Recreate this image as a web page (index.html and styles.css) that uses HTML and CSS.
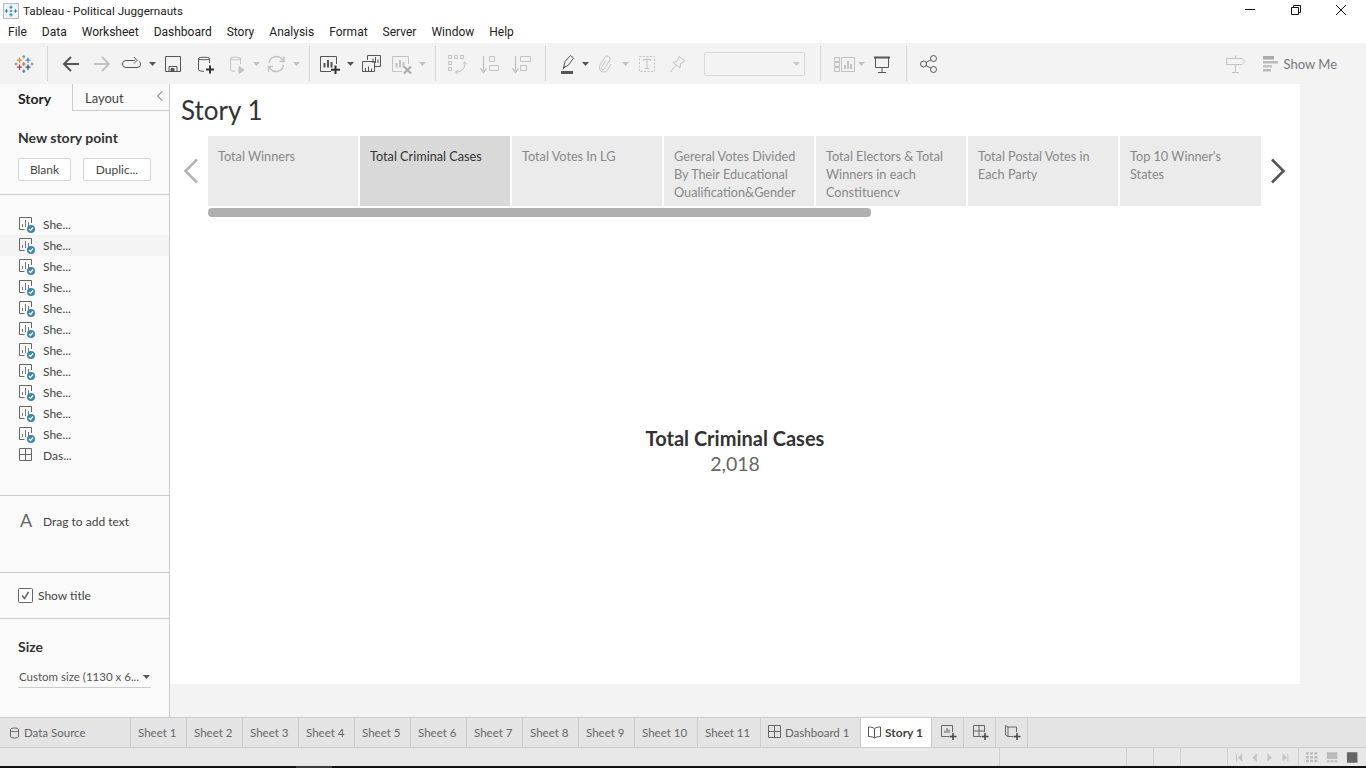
FILE: index.html
```html
<!DOCTYPE html>
<html lang="en">
  <head>
    <meta charset="UTF-8" />
    <title>Tableau - Political Juggernauts</title>
    <link rel="stylesheet" href="styles.css">
  </head>
  <body>
    <svg class="defs" width="0" height="0">
      <symbol id="sheet" viewBox="0 0 18 18">
        <path d="M6.500 13.500H1.500V1.500H13.500V7" fill="none" stroke="#666"/>
        <path d="M4.500 11V8M7.500 11V4M10.500 11V6" fill="none" stroke="#777"/>
        <circle cx="13" cy="13" r="4" fill="#3b86ac"/>
        <path d="M11 13l1.500 1.500 2.500-3" fill="none" stroke="#fff" stroke-width="1.200"/>
      </symbol>
      <symbol id="dash" viewBox="0 0 18 18">
        <path d="M1.500 1.500H13.500V13.500H1.500ZM7.500 1.500V13.500M1.500 7.500H13.500" fill="none" stroke="#666"/>
      </symbol>
      <symbol id="caret" viewBox="0 0 7 4">
        <path d="M0 0H7L3.500 4Z" fill="currentColor"/>
      </symbol>
    </svg>

    <!-- window title -->
    <div class="titlebar">
      <svg class="app-logo" width="16" height="16" viewBox="0 0 16 16">
        <rect x="0.500" y="0.500" width="15" height="15" fill="#eef3f6" stroke="#bbb"/>
        <path d="M8 2.500V6M6.300 4.200H9.700M8 10V13.500M6.300 11.800H9.700M3.500 6.300V9.700M1.800 8H5.200M12.500 6.300V9.700M10.800 8H14.200M6.800 8H9.200M8 6.800V9.200" stroke="#2f7fa8" fill="none"/>
      </svg>
      <span class="app-title">Tableau - Political Juggernauts</span>
      <div class="win-btns">
        <span class="win-btn">
          <svg width="12" height="12" viewBox="0 0 12 12"><path d="M1 5.500H11" stroke="#111"/></svg>
        </span>
        <span class="win-btn">
          <svg width="12" height="12" viewBox="0 0 12 12"><path d="M1.500 3.500H8.500V10.500H1.500ZM3.500 3.500V1.500H10.500V8.500H8.500" fill="none" stroke="#111"/></svg>
        </span>
        <span class="win-btn">
          <svg width="12" height="12" viewBox="0 0 12 12"><path d="M1 1L11 11M11 1L1 11" stroke="#111"/></svg>
        </span>
      </div>
    </div>

    <nav class="menubar">
      <a>File</a><a>Data</a><a>Worksheet</a><a>Dashboard</a><a>Story</a><a>Analysis</a><a>Format</a><a>Server</a><a>Window</a><a>Help</a>
    </nav>

    <!-- toolbar, cells keep the icons on their columns -->
    <div class="toolbar">
      <span class="cell w32">
        <svg width="20" height="20" viewBox="0 0 20 20" fill="none" stroke-width="1.200">
          <path d="M5.500 3.500V9M3 6.200H8" stroke="#e8862e"/>
          <path d="M14 3.500V9M11.500 6.200H16.500" stroke="#5b87a8"/>
          <path d="M5.500 10.500V16M3 13.200H8" stroke="#c5354c"/>
          <path d="M14 10.500V16M11.500 13.200H16.500" stroke="#2c4f7c"/>
          <path d="M9.800 1V4.500M8.300 2.700H11.300" stroke="#6aa0b8"/>
          <path d="M9.800 15.500V19M8.300 17.200H11.300" stroke="#4f7fa0"/>
          <path d="M2 8.500V11.500M.5 10H3.500" stroke="#7a9cb2"/>
          <path d="M18 8.500V11.500M16.500 10H19.500" stroke="#6f91a8"/>
          <path d="M9.800 8V12M8 10H11.600" stroke="#b5763c"/>
        </svg>
      </span>
      <span class="cell w15"><i class="sep"></i></span>
      <span class="cell w31 on">
        <svg class="ic" viewBox="0 0 24 24" stroke-width="2"><path d="M20 12H5M12 5l-7 7 7 7"/></svg>
      </span>
      <span class="cell w32 off">
        <svg class="ic" viewBox="0 0 24 24" stroke-width="2"><path d="M4 12H19M12 5l7 7-7 7"/></svg>
      </span>
      <span class="cell w26 on">
        <svg class="ic" viewBox="0 0 24 24"><path d="M16 8.500H7a3.500 3.500 0 0 0 0 7h11a3.500 3.500 0 0 0 2.500-6"/><path d="M15 5l3 3.500-3 3" /></svg>
      </span>
      <span class="cell w16 on"><svg class="car"><use href="#caret"/></svg></span>
      <span class="cell w26 on">
        <svg class="ic" viewBox="0 0 24 24"><path d="M4.500 4.500H19.500V19.500H4.500ZM8 19.500V14.500H16V19.500"/><path d="M10 16.500H13V19.500H10Z" fill="currentColor"/></svg>
      </span>
      <span class="cell w38 on">
        <svg class="ic" viewBox="0 0 24 24"><path d="M16.500 11V6.500C16.500 4.800 5.500 4.800 5.500 6.500V17.500C5.500 18.800 8 19.300 11 19.300M5.500 6.500C5.500 8.200 16.500 8.200 16.500 6.500"/><path d="M17 13.500V21.500M13 17.500H21" stroke="#333" stroke-width="2"/></svg>
      </span>
      <span class="cell w24 off">
        <svg class="ic" viewBox="0 0 24 24"><path d="M16.500 12V6.500C16.500 4.800 6.500 4.800 6.500 6.500V17.500C6.500 18.800 9 19.300 11 19.300M6.500 6.500C6.500 8.200 16.500 8.200 16.500 6.500"/><path d="M15 14.500L20 18L15 21.500Z" fill="currentColor"/></svg>
      </span>
      <span class="cell w16 off"><svg class="car"><use href="#caret"/></svg></span>
      <span class="cell w24 off">
        <svg class="ic" viewBox="0 0 24 24" stroke-width="1.500"><path d="M5 11a7.500 7.500 0 0 1 13-4l1.500 2M19.500 13a7.500 7.500 0 0 1-13 4L5 15"/><path d="M20 4.500V9.500H15.500M4.500 19.500V14.500H9"/></svg>
      </span>
      <span class="cell w16 off"><svg class="car"><use href="#caret"/></svg></span>
      <span class="cell w10"><i class="sep"></i></span>
      <span class="cell w32 on">
        <svg class="ic" viewBox="0 0 24 24"><path d="M13 19.500H2.500V4.500H18.500V12"/><path d="M6.500 15.500V11M10 15.500V8M13.500 15.500V10" stroke-width="2"/><path d="M17.500 13.500V22M13 17.800H22" stroke="#333" stroke-width="2"/></svg>
      </span>
      <span class="cell w8 on"><svg class="car"><use href="#caret"/></svg></span>
      <span class="cell w34 on">
        <svg class="ic" viewBox="0 0 24 24"><path d="M8.500 8V3.500H21.500V14.500H16"/><path d="M14 11V6.500M16.500 11V5M19 11V7.500"/><path d="M3.500 9.500H15.500V19.500H3.500ZM6.500 19.500V16M9.500 19.500V14.500M12.500 19.500V16.500"/></svg>
      </span>
      <span class="cell w28 off">
        <svg class="ic" viewBox="0 0 24 24"><path d="M12 19.500H2.500V4.500H18.500V12"/><path d="M6.500 15.500V11M10 15.500V8M13.500 15.500V10" stroke-width="2"/><path d="M14 14.500L21 21.500M21 14.500L14 21.500" stroke-width="2" stroke="#aaa"/></svg>
      </span>
      <span class="cell w12 off"><svg class="car"><use href="#caret"/></svg></span>
      <span class="cell w14"><i class="sep"></i></span>
      <span class="cell w30 off">
        <svg class="ic" viewBox="0 0 24 24"><path d="M3.500 3.500H6.500V6.500H3.500ZM9.500 3.500H12.500V6.500H9.500ZM15.500 3.500H18.500V6.500H15.500ZM3.500 9.500H6.500V12.500H3.500ZM3.500 15.500H6.500V18.500H3.500ZM19.500 10c1.500 5-2 10-8 10"/><path d="M18 12.500l1.500-2.500 2.500 2M13 18l-2.500 2 2.500 2"/></svg>
      </span>
      <span class="cell w34 off">
        <svg class="ic" viewBox="0 0 24 24"><path d="M6.500 4V20M3.500 16.500L6.500 20.500L9.500 16.500" stroke-width="1.300"/><path d="M12.500 4.500H17.500V9.500H12.500ZM12.500 13.500H21.500V18.500H12.500Z"/></svg>
      </span>
      <span class="cell w30 off">
        <svg class="ic" viewBox="0 0 24 24"><path d="M6.500 4V20M3.500 16.500L6.500 20.500L9.500 16.500" stroke-width="1.300"/><path d="M11.500 4.500H21.500V9.500H11.500ZM11.500 13.500H17.500V18.500H11.500Z"/></svg>
      </span>
      <span class="cell w18"><i class="sep"></i></span>
      <span class="cell w28 on">
        <svg class="ic" viewBox="0 0 24 24"><path d="M7.500 16L9 9.500L14.500 3.500L17.500 6L12.500 13Z"/><path d="M7 17.500L9 14"/><path d="M5 20.500H17" stroke-width="3"/></svg>
      </span>
      <span class="cell w6 on"><svg class="car"><use href="#caret"/></svg></span>
      <span class="cell w34 off">
        <svg class="ic" viewBox="0 0 24 24"><path d="M12.500 9L8.500 15.500a1.500 1.500 0 0 0 2.600 1.500L17 8a3 3 0 0 0-5-3L7 13a4.500 4.500 0 0 0 7.500 5L18 12"/></svg>
      </span>
      <span class="cell w6 off"><svg class="car"><use href="#caret"/></svg></span>
      <span class="cell w38 off">
        <svg class="ic" viewBox="0 0 24 24"><path d="M4.500 4.500H19.500V19.500H4.500Z" stroke-dasharray="2 1.500"/><path d="M8.500 9V7.500H15.500V9M12 7.500V16.500M10 16.500H14"/></svg>
      </span>
      <span class="cell w22 off">
        <svg class="ic" viewBox="0 0 24 24"><path d="M14 4.500L20 9L15.500 11.500L15 16L8 10.500L12.500 9ZM10.500 13.500L5.500 20"/></svg>
      </span>
      <span class="tool-select"><svg class="car"><use href="#caret"/></svg></span>
      <span class="cell w30"><i class="sep"></i></span>
      <span class="cell w20 off">
        <svg class="ic" viewBox="0 0 24 24"><path d="M1.500 5.500H6.500V9.500H1.500ZM1.500 10.500H6.500V14.500H1.500ZM1.500 15.500H6.500V19.500H1.500ZM8.500 5.500H21.500V19.500H8.500Z"/><path d="M12 17V13M15 17V9M18 17V12" stroke-width="2"/></svg>
      </span>
      <span class="cell w12 off"><svg class="car"><use href="#caret"/></svg></span>
      <span class="cell w30 on">
        <svg class="ic" viewBox="0 0 24 24"><path d="M4 5.500H20" stroke-width="2"/><path d="M5.500 5.500V15.500H18.500V5.500M12 15.500V20.500M8 20.500H16"/></svg>
      </span>
      <span class="cell w18"><i class="sep"></i></span>
      <span class="cell w28 on">
        <svg class="ic" viewBox="0 0 24 24" stroke="#333"><circle cx="6.500" cy="12" r="3"/><circle cx="16.500" cy="6.500" r="3"/><circle cx="16.500" cy="17.500" r="3"/><path d="M9 10.500L14 7.800M9 13.500L14 16.200"/></svg>
      </span>
      <span class="tool-right">
        <span class="off signpost">
          <svg class="ic" viewBox="0 0 24 24"><path d="M3.500 6.500H19L22 9.500L19 12.500H3.500ZM12.500 3.500V6.500M12.500 12.500V20.500M9 20.500H16"/></svg>
        </span>
        <svg class="showme-ic" width="15" height="16" viewBox="0 0 15 16">
          <path d="M0 0H11V3.500H0Z" fill="#aaa"/>
          <path d="M0 5H15V7.500H0Z" fill="#bbb"/>
          <path d="M0 9H9V11.500H0Z" fill="#c4c4c4"/>
          <path d="M0 13H8V15.500H0Z" fill="#bbb"/>
        </svg>
        <span class="showme">Show Me</span>
      </span>
    </div>

    <div class="main">
      <!-- left panel -->
      <aside class="panel">
        <div class="panel-tabs">
          <span class="ptab ptab-on">Story</span>
          <span class="ptab">Layout
            <svg class="ptab-hide" width="7" height="10" viewBox="0 0 7 10"><path d="M6 .5L1.500 5L6 9.500" fill="none" stroke="#555"/></svg>
          </span>
        </div>

        <div class="pbox pbox-new">
          <h4>New story point</h4>
          <div class="new-btns">
            <button class="btn btn-blank">Blank</button>
            <button class="btn btn-dup">Duplic...</button>
          </div>
        </div>

        <ul class="pbox sheet-list">
          <li><svg class="sh"><use href="#sheet"/></svg>She...</li>
          <li class="hover"><svg class="sh"><use href="#sheet"/></svg>She...</li>
          <li><svg class="sh"><use href="#sheet"/></svg>She...</li>
          <li><svg class="sh"><use href="#sheet"/></svg>She...</li>
          <li><svg class="sh"><use href="#sheet"/></svg>She...</li>
          <li><svg class="sh"><use href="#sheet"/></svg>She...</li>
          <li><svg class="sh"><use href="#sheet"/></svg>She...</li>
          <li><svg class="sh"><use href="#sheet"/></svg>She...</li>
          <li><svg class="sh"><use href="#sheet"/></svg>She...</li>
          <li><svg class="sh"><use href="#sheet"/></svg>She...</li>
          <li><svg class="sh"><use href="#sheet"/></svg>She...</li>
          <li><svg class="sh"><use href="#dash"/></svg>Das...</li>
        </ul>

        <div class="pbox pbox-text">
          <span class="big-a">A</span>
          <span>Drag to add text</span>
        </div>

        <div class="pbox pbox-title">
          <svg width="15" height="15" viewBox="0 0 15 15" fill="none">
            <rect x="0.500" y="0.500" width="14" height="14" rx="1" fill="#fff" stroke="#666"/>
            <path d="M4 7.500L6.500 10.500L10.500 4" stroke="#666" stroke-width="1.500"/>
          </svg>
          <span>Show title</span>
        </div>

        <div class="pbox-size">
          <h4>Size</h4>
          <div class="size-select">
            <span>Custom size (1130 x 6...</span>
            <svg class="car"><use href="#caret"/></svg>
          </div>
        </div>
      </aside>

      <!-- story -->
      <div class="canvas">
        <section class="story">
          <h1 class="story-title">Story 1</h1>
          <div class="points-row">
            <svg class="arrow" width="16" height="26" viewBox="0 0 16 26"><path d="M14 1.500L2.500 13L14 24.500" fill="none" stroke="#b4b4b4" stroke-width="2.500"/></svg>
            <div class="points-wrap">
              <div class="points">
                <div class="point"><p>Total Winners</p></div>
                <div class="point point-on"><p>Total Criminal Cases</p></div>
                <div class="point"><p>Total Votes In LG</p></div>
                <div class="point"><p>Gereral Votes Divided By Their Educational Qualification&amp;Gender</p></div>
                <div class="point"><p>Total Electors &amp; Total Winners in each Constituency</p></div>
                <div class="point"><p>Total Postal Votes in Each Party</p></div>
                <div class="point point-last"><p>Top 10 Winner's States</p></div>
              </div>
              <div class="scroll-thumb"></div>
            </div>
            <svg class="arrow" width="16" height="26" viewBox="0 0 16 26"><path d="M2 1.500L13.500 13L2 24.500" fill="none" stroke="#555" stroke-width="2.500"/></svg>
          </div>
          <div class="story-body">
            <div class="kpi-name">Total Criminal Cases</div>
            <div class="kpi-value">2,018</div>
          </div>
        </section>
      </div>
    </div>

    <!-- sheet tabs -->
    <div class="tabs">
      <span class="tab tab-src">
        <svg width="10" height="12" viewBox="0 0 10 12" fill="none"><path d="M.5 2.500C.5 .5 8.500 .5 8.500 2.500V9.500C8.500 11.500 .5 11.500 .5 9.500ZM.5 3.500C.5 5 8.500 5 8.500 3.500" stroke="#666"/></svg>
        Data Source
      </span>
      <span class="tab">Sheet 1</span>
      <span class="tab">Sheet 2</span>
      <span class="tab">Sheet 3</span>
      <span class="tab">Sheet 4</span>
      <span class="tab">Sheet 5</span>
      <span class="tab">Sheet 6</span>
      <span class="tab">Sheet 7</span>
      <span class="tab">Sheet 8</span>
      <span class="tab">Sheet 9</span>
      <span class="tab tab-2d">Sheet 10</span>
      <span class="tab tab-2d">Sheet 11</span>
      <span class="tab tab-dash"><svg class="tab-ic"><use href="#dash"/></svg>Dashboard 1</span>
      <span class="tab tab-story">
        <svg width="13" height="13" viewBox="0 0 13 13" fill="none" stroke="#555"><path d="M6.500 2.500C5 1.500 3 1 .5 1V10.500C3 10.500 5 11 6.500 12C8 11 10 10.500 12.500 10.500V1C10 1 8 1.500 6.500 2.500ZM6.500 2.500V12"/></svg>
        Story 1
      </span>
      <span class="tab tab-add">
        <svg width="16" height="16" viewBox="0 0 16 16" fill="none" stroke="#666"><path d="M8 11.500H.5V.5H11.500V7"/><path d="M4 8V5.500M6 8V3M8 8V4.500"/><path d="M12 8V15M8.500 11.500H15.500" stroke="#444" stroke-width="1.500"/></svg>
      </span>
      <span class="tab tab-add">
        <svg width="16" height="16" viewBox="0 0 16 16" fill="none" stroke="#666"><path d="M8 11.500H.5V.5H11.500V7M6 .5V11.500M.5 6H11.500"/><path d="M12 8V15M8.500 11.500H15.500" stroke="#444" stroke-width="1.500"/></svg>
      </span>
      <span class="tab tab-add">
        <svg width="16" height="16" viewBox="0 0 16 16" fill="none" stroke="#666"><path d="M8 11.500H3L.5 10V.5L3 2H11.500V7M3 2V11.500"/><path d="M12 8V15M8.500 11.500H15.500" stroke="#444" stroke-width="1.500"/></svg>
      </span>
    </div>

    <!-- status bar -->
    <div class="status">
      <span class="st st-a"></span>
      <span class="st st-b"></span>
      <span class="st st-b"></span>
      <span class="st st-c"></span>
      <span class="st st-nav">
        <svg width="64" height="9" viewBox="0 0 64 9" fill="#c4c4c4">
          <path d="M0 .5H1V8.500H0ZM6.500 0V9L2 4.500ZM21.500 0V9L17 4.500ZM32.500 0L37 4.500L32.500 9ZM48 0L52.500 4.500L48 9ZM53 .5H54V8.500H53Z"/>
        </svg>
      </span>
      <span class="st-views">
        <svg width="64" height="12" viewBox="0 0 66 12">
          <path d="M3 1H6V3.500H3ZM7.500 1H10.500V3.500H7.500ZM12 1H15V3.500H12ZM3 5H6V7.500H3ZM7.500 5H10.500V7.500H7.500ZM12 5H15V7.500H12ZM3 9H6V11.500H3ZM7.500 9H10.500V11.500H7.500ZM12 9H15V11.500H12Z" fill="#bbb"/>
          <path d="M25 1H36V8H25ZM25 9.500H28V11.500H25ZM29 9.500H32V11.500H29ZM33 9.500H36V11.500H33Z" fill="#bbb"/>
          <rect x="46" y="1" width="11" height="11" fill="#666"/>
        </svg>
      </span>
    </div>
    <div class="taskbar"><i class="task-on"></i></div>
  </body>
</html>
```

FILE: styles.css
```css
* {
  box-sizing: border-box;
}
html,
body {
  height: 100%;
}
body {
  margin: 0;
  display: flex;
  flex-direction: column;
  height: 768px;
  overflow: hidden;
  font-family: "Lato", "Open Sans", sans-serif;
  font-size: 12px;
  color: #555;
  background-color: #fff;
}
.defs {
  position: absolute;
}

/* title + menu */
.titlebar {
  flex: none;
  display: flex;
  align-items: center;
  height: 21px;
  padding-left: 3px;
  font-family: "Roboto", sans-serif;
  color: #222;
}
.app-logo {
  margin-right: 4px;
}
.app-title {
  font-size: 11.7px;
}
.win-btns {
  margin-left: auto;
  display: flex;
  padding-right: 2px;
  align-self: flex-start;
}
.win-btn {
  display: flex;
  justify-content: center;
  width: 45.5px;
  padding-top: 4px;
}
.menubar {
  flex: none;
  display: flex;
  gap: 15px;
  align-items: center;
  height: 22px;
  padding-left: 8px;
  font-family: "Roboto", sans-serif;
  font-size: 12px;
  color: #222;
}

/* toolbar */
.toolbar {
  flex: none;
  display: flex;
  align-items: center;
  height: 41px;
  padding-left: 8px;
  background-color: #f3f3f3;
}
.cell {
  flex: none;
  display: flex;
  justify-content: center;
  align-items: center;
  height: 100%;
}
.w6 { width: 6px; }
.w8 { width: 8px; }
.w10 { width: 10px; }
.w12 { width: 12px; }
.w14 { width: 14px; }
.w15 { width: 15px; }
.w16 { width: 16px; }
.w18 { width: 18px; }
.w20 { width: 20px; }
.w22 { width: 22px; }
.w24 { width: 24px; }
.w26 { width: 26px; }
.w28 { width: 28px; }
.w30 { width: 30px; }
.w31 { width: 31px; }
.w32 { width: 32px; }
.w34 { width: 34px; }
.w38 { width: 38px; }
.on {
  color: #555;
}
.off {
  color: #c2c2c2;
}
.ic {
  flex: none;
  width: 24px;
  height: 24px;
  fill: none;
  stroke: currentColor;
}
.car {
  flex: none;
  width: 7px;
  height: 4px;
}
.sep {
  display: block;
  width: 1px;
  height: 35px;
  background-color: #d6d6d6;
}
.tool-select {
  flex: none;
  display: flex;
  align-items: center;
  justify-content: flex-end;
  width: 101px;
  height: 24px;
  margin-left: 16px;
  padding-right: 4px;
  border: 1px solid #d8d8d8;
  border-radius: 2px;
  color: #c8c8c8;
}
.tool-right {
  margin-left: auto;
  display: flex;
  align-items: center;
  padding-right: 29px;
}
.signpost {
  display: flex;
  margin-right: 16px;
}
.showme-ic {
  margin-right: 6px;
}
.showme {
  font-size: 13px;
  color: #777;
}

/* main area */
.main {
  flex: 1;
  display: flex;
  min-height: 0;
  background-color: #f3f3f3;
}
.panel {
  flex: none;
  display: flex;
  flex-direction: column;
  width: 170px;
  background-color: #fafafa;
  border-right: 1px solid #ccc;
  color: #444;
}
.panel-tabs {
  flex: none;
  display: flex;
  height: 27px;
  background-color: #fafafa;
}
.ptab {
  position: relative;
  flex: 1;
  padding: 6px 0 0 12px;
  font-size: 13px;
  border-left: 1px solid #ccc;
  border-bottom: 1px solid #ccc;
}
.ptab-on {
  flex: none;
  width: 72px;
  padding-left: 18px;
  border: 0;
  font-size: 14px;
  font-weight: 700;
  color: #222;
}
.ptab-hide {
  position: absolute;
  top: 7px;
  right: 6px;
}
.pbox {
  flex: none;
  border-bottom: 1px solid #ccc;
}
h4 {
  margin: 0;
  font-size: 14px;
  font-weight: 700;
  color: #333;
}
.pbox-new {
  height: 84px;
  padding: 18px 18px 0;
}
.new-btns {
  display: flex;
  gap: 12px;
  margin-top: 12px;
}
.btn {
  height: 23px;
  padding: 0;
  font: inherit;
  color: #444;
  background-color: #fff;
  border: 1px solid #d4d4d4;
  border-radius: 2px;
}
.btn-blank {
  width: 53px;
}
.btn-dup {
  width: 68px;
}
.sheet-list {
  height: 301px;
  margin: 0;
  padding: 19px 0 0;
  list-style: none;
}
.sheet-list li {
  display: flex;
  align-items: center;
  height: 21px;
  padding-left: 18px;
}
.sheet-list .hover {
  background-color: #f4f4f4;
}
.sh {
  flex: none;
  width: 18px;
  height: 18px;
  margin-right: 7px;
}
.pbox-text {
  display: flex;
  height: 77px;
  padding: 18px 0 0 20px;
}
.big-a {
  width: 23px;
  margin-top: -5px;
  font-size: 18px;
  color: #666;
}
.pbox-title {
  display: flex;
  align-items: flex-start;
  gap: 5px;
  height: 46px;
  padding: 15px 0 0 18px;
}
.pbox-size {
  padding: 19px 18px 0;
}
.size-select {
  display: flex;
  align-items: center;
  justify-content: space-between;
  height: 22px;
  margin-top: 11px;
  padding: 0 1px;
  border-bottom: 1px solid #ccc;
  font-size: 11.5px;
  white-space: nowrap;
  color: #555;
}

/* story */
.canvas {
  flex: 1;
  min-width: 0;
}
.story {
  display: flex;
  flex-direction: column;
  width: 1130px;
  height: 600px;
  background-color: #fff;
}
.story-title {
  flex: none;
  height: 52px;
  margin: 0;
  padding: 10px 0 0 11px;
  font-size: 26px;
  font-weight: 400;
  color: #333;
}
.points-row {
  flex: none;
  display: flex;
  align-items: flex-start;
  height: 81px;
}
.arrow {
  flex: none;
  margin-top: 22px;
}
.points-row .arrow:first-child {
  margin-left: 13px;
  margin-right: 9px;
}
.points-row .arrow:last-child {
  margin-left: 9px;
}
.points-wrap {
  flex: none;
  width: 1053px;
}
.points {
  display: flex;
  gap: 2px;
  overflow: hidden;
}
.point {
  flex: none;
  width: 150px;
  height: 70px;
  padding: 11px 10px 0;
  background-color: #ebebeb;
  font-size: 12.7px;
  color: #888;
}
.point p {
  height: 50px;
  margin: 0;
  overflow: hidden;
  line-height: 18px;
}
.point-on {
  background-color: #d9d9d9;
  color: #333;
}
.point-last {
  width: 141px;
}
.scroll-thumb {
  width: 663px;
  height: 9px;
  margin-top: 2px;
  background-color: #b0b0b0;
  border-radius: 4px;
}
.story-body {
  flex: 1;
  display: flex;
  flex-direction: column;
  align-items: center;
  justify-content: center;
  padding-top: 1px;
}
.kpi-name {
  font-size: 20px;
  font-weight: 700;
  line-height: 26px;
  color: #333;
}
.kpi-value {
  font-size: 19.5px;
  line-height: 26px;
  color: #666;
}

/* tabs */
.tabs {
  flex: none;
  display: flex;
  height: 31px;
  background-color: #e4e4e4;
  border-top: 1px solid #ccc;
  border-bottom: 1px solid #ccc;
  font-size: 11.5px;
  color: #666;
}
.tab {
  flex: none;
  display: flex;
  align-items: center;
  width: 56px;
  padding-left: 7px;
  border-right: 1px solid #ccc;
  white-space: nowrap;
}
.tab-src {
  width: 131px;
  padding-left: 10px;
  gap: 4px;
}
.tab-2d {
  width: 63px;
}
.tab-dash {
  width: 100px;
  padding-left: 6px;
}
.tab-ic {
  flex: none;
  width: 18px;
  height: 18px;
}
.tab-story {
  width: 71px;
  gap: 4px;
  background-color: #fff;
  font-size: 12px;
  font-weight: 700;
  color: #444;
}
.tab-add {
  width: 32px;
  padding-left: 9px;
}

/* status */
.status {
  flex: none;
  display: flex;
  justify-content: flex-end;
  height: 18px;
  background-color: #e8e8e8;
}
.st {
  height: 100%;
  border-left: 1px solid #d0d0d0;
}
.st-a {
  width: 127px;
}
.st-b {
  width: 27px;
}
.st-c {
  width: 47px;
}
.st-nav {
  display: flex;
  align-items: center;
  width: 71px;
  padding-left: 8px;
}
.st-views {
  display: flex;
  align-items: center;
  width: 68px;
  padding-left: 4px;
  border-left: 1px solid #d0d0d0;
}
.taskbar {
  flex: none;
  display: flex;
  height: 2px;
  padding-left: 296px;
  background-color: #111;
}
.task-on {
  width: 36px;
  background-color: #3a3a3a;
}
```
